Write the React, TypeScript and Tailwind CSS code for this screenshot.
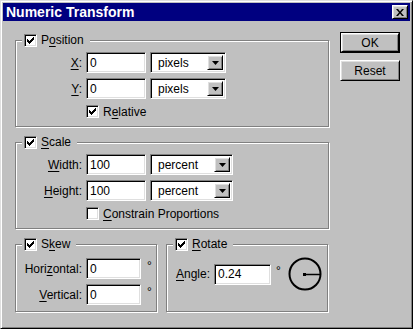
import type { ReactNode } from 'react';

const raised =
  'border border-t-white border-l-white border-r-black border-b-black shadow-[inset_1px_1px_0_#dfdfdf,inset_-1px_-1px_0_#808080]';
const sunken =
  'border border-t-[#808080] border-l-[#808080] border-r-white border-b-white shadow-[inset_1px_1px_0_#000,inset_-1px_-1px_0_#dfdfdf]';
const etched = 'border border-[#808080] shadow-[inset_1px_1px_0_#fff,1px_1px_0_#fff]';

function U({ children }: { children: ReactNode }) {
  return <span className="underline underline-offset-[2px]">{children}</span>;
}

function Check({ checked = true }: { checked?: boolean }) {
  return (
    <span className={`${sunken} bg-white w-[13px] h-[13px] flex items-center justify-center shrink-0`}>
      {checked && (
        <svg width="7" height="7" viewBox="0 0 7 7">
          <path d="M0 2h1v1h1v1h1V3h1V2h1V1h1V0h1v3H6v1H5v1H4v1H3v1H2V6H1V5H0z" fill="#000" />
        </svg>
      )}
    </span>
  );
}

function Legend({ children, checked = true }: { children: ReactNode; checked?: boolean }) {
  return (
    <legend className="ml-[6px] pl-[2px] pr-[6px] h-[14px] flex items-center gap-[4px] bg-[#c0c0c0]">
      <Check checked={checked} />
      <span>{children}</span>
    </legend>
  );
}

function Field({ value, className }: { value: string; className: string }) {
  return (
    <div className={`${sunken} bg-white h-[21px] flex items-center pl-[3px] ${className}`}>{value}</div>
  );
}

function Select({ value, className }: { value: string; className: string }) {
  return (
    <div className={`${sunken} bg-white h-[21px] flex items-center justify-between pl-[7px] pr-[2px] ${className}`}>
      <span>{value}</span>
      <span className={`${raised} bg-[#c0c0c0] w-[16px] h-[15px] flex items-center justify-center`}>
        <svg width="7" height="4" viewBox="0 0 7 4">
          <path d="M0 0h7L3.5 4z" fill="#000" />
        </svg>
      </span>
    </div>
  );
}

function Label({ children }: { children: ReactNode }) {
  return <span className="text-right">{children}</span>;
}

export default function App() {
  return (
    <div
      className="w-[413px] h-[329px] bg-[#c0c0c0] border border-t-[#dfdfdf] border-l-[#dfdfdf] border-r-black border-b-black shadow-[inset_1px_1px_0_#fff,inset_-1px_-1px_0_#808080] p-[2px] text-[12px] text-black"
      style={{ fontFamily: '"Liberation Sans", Arial, sans-serif' }}
    >
      <div className="h-[18px] bg-[#000080] flex items-center justify-between pl-[3px] pr-[2px]">
        <span className="text-white font-bold text-[14px]">Numeric Transform</span>
        <span className={`${raised} bg-[#c0c0c0] w-[16px] h-[14px] flex items-center justify-center`}>
          <svg width="8" height="7" viewBox="0 0 8 7">
            <path d="M0 0h2l2 2.5L6 0h2L5 3.5 8 7H6L4 4.5 2 7H0l3-3.5z" fill="#000" />
          </svg>
        </span>
      </div>

      <div className="flex pl-[12px]">
        <div className="flex flex-col">
          <fieldset className={`${etched} w-[314px] mt-[12px] pt-[5px] pb-[8px]`}>
            <Legend>
              P<U>o</U>sition
            </Legend>
            <div className="grid grid-cols-[66px_60px_76px] gap-x-[4px] gap-y-[5px] items-center">
              <Label>
                <U>X</U>:
              </Label>
              <Field value="0" className="w-[60px]" />
              <Select value="pixels" className="w-[76px]" />
              <Label>
                <U>Y</U>:
              </Label>
              <Field value="0" className="w-[60px]" />
              <Select value="pixels" className="w-[76px]" />
              <span />
              <div className="col-span-2 flex items-center gap-[4px] h-[13px] mt-[1px]">
                <Check />
                <span>
                  R<U>e</U>lative
                </span>
              </div>
            </div>
          </fieldset>

          <fieldset className={`${etched} w-[314px] mt-[8px] pt-[5px] pb-[8px]`}>
            <Legend>
              <U>S</U>cale
            </Legend>
            <div className="grid grid-cols-[66px_60px_83px] gap-x-[4px] gap-y-[5px] items-center">
              <Label>
                <U>W</U>idth:
              </Label>
              <Field value="100" className="w-[60px]" />
              <Select value="percent" className="w-[83px]" />
              <Label>
                <U>H</U>eight:
              </Label>
              <Field value="100" className="w-[60px]" />
              <Select value="percent" className="w-[83px]" />
              <span />
              <div className="col-span-2 flex items-center gap-[4px] h-[13px] mt-[1px]">
                <Check checked={false} />
                <span>
                  <U>C</U>onstrain Proportions
                </span>
              </div>
            </div>
          </fieldset>

          <div className="flex gap-[9px] mt-[8px]">
            <fieldset className={`${etched} w-[142px] pt-[7px] pb-[6px]`}>
              <Legend>
                S<U>k</U>ew
              </Legend>
              <div className="grid grid-cols-[66px_55px_auto] gap-x-[4px] gap-y-[5px] items-center">
                <Label>
                  Hori<U>z</U>ontal:
                </Label>
                <Field value="0" className="w-[55px]" />
                <span className="pl-[2px] -translate-y-[3px]">°</span>
                <Label>
                  <U>V</U>ertical:
                </Label>
                <Field value="0" className="w-[55px]" />
                <span className="pl-[2px] -translate-y-[3px]">°</span>
              </div>
            </fieldset>

            <fieldset className={`${etched} w-[162px] pt-[6px] pb-[6px]`}>
              <Legend>
                <U>R</U>otate
              </Legend>
              <div className="flex items-center pl-[9px]">
                <span>
                  <U>A</U>ngle:
                </span>
                <Field value="0.24" className="w-[57px] ml-[4px]" />
                <span className="ml-[5px] -translate-y-[3px]">°</span>
                <svg width="34" height="34" viewBox="0 0 34 34" className="ml-[7px]">
                  <circle cx="17" cy="17" r="15.5" fill="none" stroke="#000" strokeWidth="2" />
                  <rect x="15" y="16" width="3" height="3" fill="#000" />
                  <path d="M17 17.5H32" stroke="#000" strokeWidth="1.5" />
                </svg>
              </div>
            </fieldset>
          </div>
        </div>

        <div className="flex flex-col ml-[11px] mt-[11px] gap-[7px]">
          <div className="border border-black">
            <div className={`${raised} bg-[#c0c0c0] w-[58px] h-[19px] flex items-center justify-center`}>OK</div>
          </div>
          <div className={`${raised} bg-[#c0c0c0] w-[60px] h-[21px] flex items-center justify-center`}>Reset</div>
        </div>
      </div>
    </div>
  );
}
